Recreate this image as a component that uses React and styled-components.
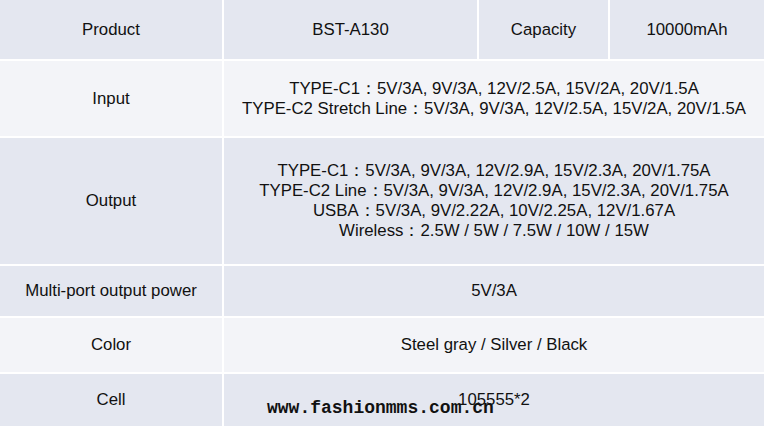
import React from "react";
import styled, { createGlobalStyle } from "styled-components";

const GlobalStyle = createGlobalStyle`
  * {
    box-sizing: border-box;
  }
  html, body {
    margin: 0;
    padding: 0;
    background: #ffffff;
  }
  body {
    width: 764px;
    height: 426px;
    overflow: hidden;
    font-family: "Liberation Sans", Arial, sans-serif;
  }
`;

const Page = styled.div`
  position: relative;
  width: 764px;
  height: 426px;
  overflow: hidden;
`;

const SpecTable = styled.table`
  width: 764px;
  border-collapse: separate;
  border-spacing: 0;
  table-layout: fixed;
  font-size: 16.8px;
  line-height: 20px;
  color: #111;
`;

const Row = styled.tr`
  background: ${(p) => (p.$light ? "#f3f4f8" : "#e4e7f0")};
`;

const Cell = styled.td`
  height: ${(p) => p.$h}px;
  padding: 0;
  text-align: center;
  vertical-align: middle;
  border-bottom: 2px solid #ffffff;
  border-right: 2px solid #ffffff;
  &:last-child {
    border-right: none;
  }
`;

const Line = styled.div`
  white-space: nowrap;
`;

// site stamp printed over the bottom of the table
const Watermark = styled.div`
  position: absolute;
  left: 267px;
  top: 398px;
  font-family: "Liberation Mono", "Courier New", monospace;
  font-weight: bold;
  font-size: 18px;
  line-height: 20px;
  color: #111;
`;

const rows = [
  { light: false, h: 61, label: "Product", extra: true },
  {
    light: true,
    h: 77,
    label: "Input",
    lines: [
      "TYPE-C1：5V/3A, 9V/3A, 12V/2.5A, 15V/2A, 20V/1.5A",
      "TYPE-C2 Stretch Line：5V/3A, 9V/3A, 12V/2.5A, 15V/2A, 20V/1.5A",
    ],
  },
  {
    light: false,
    h: 128,
    label: "Output",
    lines: [
      "TYPE-C1：5V/3A, 9V/3A, 12V/2.9A, 15V/2.3A, 20V/1.75A",
      "TYPE-C2 Line：5V/3A, 9V/3A, 12V/2.9A, 15V/2.3A, 20V/1.75A",
      "USBA：5V/3A, 9V/2.22A, 10V/2.25A, 12V/1.67A",
      "Wireless：2.5W / 5W / 7.5W / 10W / 15W",
    ],
  },
  { light: false, h: 52, label: "Multi-port output power", lines: ["5V/3A"] },
  { light: true, h: 56, label: "Color", lines: ["Steel gray / Silver / Black"] },
  { light: false, h: 54, label: "Cell", lines: ["105555*2"] },
];

export default function App() {
  return (
    <Page>
      <GlobalStyle />
      <SpecTable>
        <colgroup>
          <col style={{ width: 224 }} />
          <col style={{ width: 255 }} />
          <col style={{ width: 131 }} />
          <col style={{ width: 154 }} />
        </colgroup>
        <tbody>
          {rows.map((r) => (
            <Row key={r.label} $light={r.light}>
              <Cell $h={r.h}>{r.label}</Cell>
              {r.extra ? (
                <>
                  <Cell $h={r.h}>BST-A130</Cell>
                  <Cell $h={r.h}>Capacity</Cell>
                  <Cell $h={r.h}>10000mAh</Cell>
                </>
              ) : (
                <Cell $h={r.h} colSpan={3}>
                  {r.lines.map((l) => (
                    <Line key={l}>{l}</Line>
                  ))}
                </Cell>
              )}
            </Row>
          ))}
        </tbody>
      </SpecTable>
      <Watermark>www.fashionmms.com.cn</Watermark>
    </Page>
  );
}
